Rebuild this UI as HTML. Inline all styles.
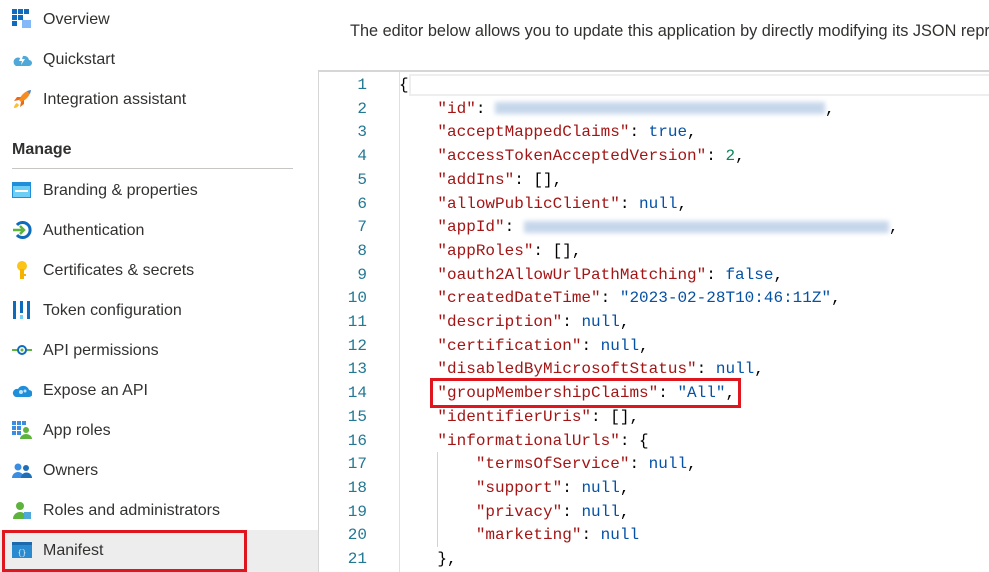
<!DOCTYPE html>
<html><head><meta charset="utf-8"><style>
*{margin:0;padding:0;box-sizing:border-box}
body{width:989px;height:572px;overflow:hidden;background:#fff;position:relative;font-family:"Liberation Sans",sans-serif;color:#323130}
.nav{position:absolute;left:43px;font-size:16px;line-height:20px;color:#323130;white-space:nowrap}
.ic{position:absolute;left:12px;width:20px;height:20px}
.mono{font-family:"Liberation Mono",monospace;font-size:16px}
.ln{position:absolute;left:320px;width:47px;text-align:right;color:#237893;line-height:23.7px}
.code{position:absolute;left:399px;line-height:23.7px;white-space:pre;color:#000}
.k{color:#a31515}.b{color:#0451a5}.n{color:#098658}
.blur{display:inline-block;height:12px;background:#b9cde6;filter:blur(2.5px);vertical-align:middle;opacity:.8}
</style></head><body>
<div style="position:absolute;left:0;top:530px;width:318px;height:42px;background:#ededed"></div>
<div style="position:absolute;left:2px;top:530px;width:245px;height:42px;border:3px solid #e0161e"></div>

<svg class="ic" style="top:9px" viewBox="0 0 20 20"><g fill="#0f6cbd"><rect x="0" y="0" width="5" height="5"/><rect x="6" y="0" width="5" height="5"/><rect x="12" y="0" width="5" height="5"/><rect x="0" y="6" width="5" height="5"/><rect x="6" y="6" width="5" height="5"/><rect x="0" y="12" width="5" height="5"/></g><rect x="10" y="11" width="9" height="8" fill="#83b9f9"/></svg>
<svg class="ic" style="top:49px" viewBox="0 0 20 20"><path d="M4 17h13a3 3 0 0 0 0-6 5 5 0 0 0-9-2 4 4 0 0 0-4 8z" fill="#50a8d8"/><path d="M9 7l-2 5h3l-1 4 4-6h-3l1-3z" fill="#fff"/></svg>
<svg class="ic" style="top:89px" viewBox="0 0 20 20"><path d="M19 1c-6 1-10 5-12 10l2 2c5-2 9-6 10-12z" fill="#f78d1e"/><path d="M7 11l-5 1 3-4 4 0zM9 13l-1 5 4-3 0-4z" fill="#e96a1c"/><path d="M5 14c-2 1-3 3-3 5 2 0 4-1 5-3z" fill="#fbc02d"/><path d="M19 1l-4 1 3 3z" fill="#3a8de0"/></svg>
<svg class="ic" style="top:180px" viewBox="0 0 20 20"><rect x="0" y="2" width="19" height="16" fill="#1e8fd8"/><rect x="1" y="6" width="17" height="11" fill="#6ecff6"/><rect x="3" y="10" width="13" height="2" fill="#fff"/></svg>
<svg class="ic" style="top:220px" viewBox="0 0 20 20"><path d="M5 5a7.5 7.5 0 1 1 0 10" fill="none" stroke="#0f6cbd" stroke-width="3"/><path d="M1 10h10M8 6l4 4-4 4" fill="none" stroke="#5db33c" stroke-width="2.5"/></svg>
<svg class="ic" style="top:260px" viewBox="0 0 20 20"><circle cx="10" cy="6" r="5" fill="#fcc419"/><rect x="8" y="9" width="4" height="10" fill="#f5b300"/><rect x="12" y="14" width="2" height="2" fill="#f5b300"/></svg>
<svg class="ic" style="top:300px" viewBox="0 0 20 20"><g fill="#0f6cbd"><rect x="1" y="1" width="3" height="18"/><rect x="8" y="1" width="3" height="12"/><rect x="15" y="1" width="3" height="18"/></g><rect x="8" y="15" width="3" height="4" fill="#6ecff6"/></svg>
<svg class="ic" style="top:340px" viewBox="0 0 20 20"><path d="M0 10h6M14 10h6" stroke="#5db33c" stroke-width="2"/><circle cx="10" cy="10" r="4" fill="none" stroke="#0f6cbd" stroke-width="2"/><circle cx="10" cy="10" r="1.5" fill="#5db33c"/></svg>
<svg class="ic" style="top:380px" viewBox="0 0 20 20"><path d="M4 17h13a3 3 0 0 0 0-7 6 6 0 0 0-11-1 4 4 0 0 0-2 8z" fill="#1e8fd8"/><circle cx="9" cy="12" r="2" fill="#bde4fb"/><circle cx="13" cy="11" r="1.5" fill="#bde4fb"/></svg>
<svg class="ic" style="top:420px" viewBox="0 0 20 20"><g fill="#3a8de0"><rect x="0" y="1" width="4" height="4"/><rect x="5" y="1" width="4" height="4"/><rect x="10" y="1" width="4" height="4"/><rect x="0" y="6" width="4" height="4"/><rect x="5" y="6" width="4" height="4"/><rect x="0" y="11" width="4" height="4"/><rect x="5" y="11" width="4" height="4"/></g><circle cx="14" cy="10" r="3" fill="#5db33c"/><path d="M8 19a6 5 0 0 1 12 0z" fill="#5db33c"/></svg>
<svg class="ic" style="top:460px" viewBox="0 0 20 20"><circle cx="6" cy="7" r="3.5" fill="#3a8de0"/><path d="M0 18a6 6 0 0 1 12 0z" fill="#3a8de0"/><circle cx="14" cy="8" r="3" fill="#1e6fb8"/><path d="M9 18a5 5 0 0 1 11 0z" fill="#1e6fb8"/></svg>
<svg class="ic" style="top:500px" viewBox="0 0 20 20"><circle cx="8" cy="6" r="4" fill="#5db33c"/><path d="M1 19a7 7 0 0 1 14 0z" fill="#5db33c"/><rect x="12" y="12" width="7" height="7" fill="#50a8d8"/></svg>
<svg class="ic" style="top:540px" viewBox="0 0 20 20"><rect x="0" y="2" width="20" height="16" fill="#2a8ad0"/><rect x="0" y="2" width="20" height="3" fill="#1b6ab0"/><text x="10" y="15" font-size="7" fill="#fff" text-anchor="middle" font-family="Liberation Mono">{}</text></svg>

<div class="nav" style="top:10px">Overview</div>
<div class="nav" style="top:50px">Quickstart</div>
<div class="nav" style="top:90px">Integration assistant</div>
<div class="nav" style="top:140px;left:12px;font-weight:bold;color:#323130">Manage</div>
<div style="position:absolute;left:12px;top:168px;width:281px;height:1px;background:#c8c6c4"></div>
<div class="nav" style="top:181px">Branding &amp; properties</div>
<div class="nav" style="top:221px">Authentication</div>
<div class="nav" style="top:261px">Certificates &amp; secrets</div>
<div class="nav" style="top:301px">Token configuration</div>
<div class="nav" style="top:341px">API permissions</div>
<div class="nav" style="top:381px">Expose an API</div>
<div class="nav" style="top:421px">App roles</div>
<div class="nav" style="top:461px">Owners</div>
<div class="nav" style="top:501px">Roles and administrators</div>
<div class="nav" style="top:541px">Manifest</div>

<div style="position:absolute;left:350px;top:21px;width:639px;height:22px;overflow:hidden"><div style="font-size:16.3px;line-height:20px;white-space:nowrap;color:#323130">The editor below allows you to update this application by directly modifying its JSON representation.</div></div>

<div style="position:absolute;left:318px;top:70px;width:671px;height:2px;background:#d6d6d6"></div>
<div style="position:absolute;left:318px;top:70px;width:1px;height:502px;background:#d6d6d6"></div>
<div style="position:absolute;left:399px;top:72px;width:1px;height:500px;background:#e0e0e0"></div>
<div style="position:absolute;left:409px;top:74px;width:580px;height:22px;border:2px solid #eeeeee;border-right:none"></div>
<div style="position:absolute;left:437px;top:452px;width:1px;height:95px;background:#d3d3d3"></div>

<div class="mono ln" style="top:74px">1<br>2<br>3<br>4<br>5<br>6<br>7<br>8<br>9<br>10<br>11<br>12<br>13<br>14<br>15<br>16<br>17<br>18<br>19<br>20<br>21</div>
<div class="mono code" style="top:74px">{
    <span class="k">"id"</span>: <span class="blur" style="width:330px"></span>,
    <span class="k">"acceptMappedClaims"</span>: <span class="b">true</span>,
    <span class="k">"accessTokenAcceptedVersion"</span>: <span class="n">2</span>,
    <span class="k">"addIns"</span>: [],
    <span class="k">"allowPublicClient"</span>: <span class="b">null</span>,
    <span class="k">"appId"</span>: <span class="blur" style="width:365px"></span>,
    <span class="k">"appRoles"</span>: [],
    <span class="k">"oauth2AllowUrlPathMatching"</span>: <span class="b">false</span>,
    <span class="k">"createdDateTime"</span>: <span class="b">"2023-02-28T10:46:11Z"</span>,
    <span class="k">"description"</span>: <span class="b">null</span>,
    <span class="k">"certification"</span>: <span class="b">null</span>,
    <span class="k">"disabledByMicrosoftStatus"</span>: <span class="b">null</span>,
    <span class="k">"groupMembershipClaims"</span>: <span class="b">"All"</span>,
    <span class="k">"identifierUris"</span>: [],
    <span class="k">"informationalUrls"</span>: {
        <span class="k">"termsOfService"</span>: <span class="b">null</span>,
        <span class="k">"support"</span>: <span class="b">null</span>,
        <span class="k">"privacy"</span>: <span class="b">null</span>,
        <span class="k">"marketing"</span>: <span class="b">null</span>
    },</div>
<div style="position:absolute;left:430px;top:378px;width:311px;height:30px;border:3px solid #e0161e"></div>
</body></html>
